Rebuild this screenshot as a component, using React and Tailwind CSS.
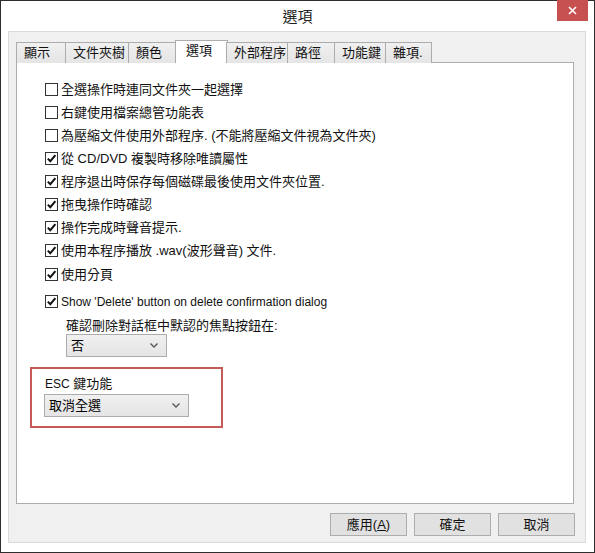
import { useState } from "react";

const font = { fontFamily: '"Liberation Sans", "Noto Sans CJK TC", sans-serif' };

const tabs = ["顯示", "文件夾樹", "顏色", "選項", "外部程序", "路徑", "功能鍵", "雜項."];
const tabWidths = [50, 64, 48, 53, 62, 48, 52, 47];

const initialOptions = [
  { label: "全選操作時連同文件夾一起選擇", checked: false },
  { label: "右鍵使用檔案總管功能表", checked: false },
  { label: "為壓縮文件使用外部程序. (不能將壓縮文件視為文件夾)", checked: false },
  { label: "從 CD/DVD 複製時移除唯讀屬性", checked: true },
  { label: "程序退出時保存每個磁碟最後使用文件夾位置.", checked: true },
  { label: "拖曳操作時確認", checked: true },
  { label: "操作完成時聲音提示.", checked: true },
  { label: "使用本程序播放 .wav(波形聲音) 文件.", checked: true },
  { label: "使用分頁", checked: true },
  { label: "Show 'Delete' button on delete confirmation dialog", checked: true, latin: true },
];

function Checkbox({ checked, onToggle }) {
  return (
    <button
      type="button"
      onClick={onToggle}
      className="w-[13px] h-[13px] border border-[#333] bg-white flex items-center justify-center shrink-0"
    >
      {checked && (
        <svg width="11" height="11" viewBox="0 0 11 11">
          <path d="M1.8 5.6 L4.3 8.2 L9.4 2.2" fill="none" stroke="#111" strokeWidth="2" />
        </svg>
      )}
    </button>
  );
}

function Select({ value, className }) {
  return (
    <div
      className={`h-[23px] border border-[#acacac] bg-gradient-to-b from-[#f0f0f0] to-[#e5e5e5] flex items-center justify-between pl-[4px] pr-[8px] ${className}`}
    >
      <span className="text-[13px] text-black">{value}</span>
      <svg width="8" height="5" viewBox="0 0 8 5">
        <path d="M0.5 0.5 L4 4 L7.5 0.5" fill="none" stroke="#555" strokeWidth="1.3" />
      </svg>
    </div>
  );
}

export default function App() {
  const [options, setOptions] = useState(initialOptions);

  const toggle = (i) =>
    setOptions((prev) =>
      prev.map((o, idx) => (idx === i ? { ...o, checked: !o.checked } : o))
    );

  return (
    <div
      style={font}
      className="w-[595px] h-[553px] bg-white border border-[#2d2d2d] flex flex-col text-[#111]"
    >
      {/* title bar */}
      <div className="h-[30px] relative flex items-center justify-center shrink-0">
        <span className="text-[15px] text-[#222] pt-[2px]">選項</span>
        <div className="absolute right-[6px] top-[-1px] w-[31px] h-[21px] bg-[#c75050] flex items-center justify-center">
          <svg width="9" height="9" viewBox="0 0 9 9">
            <path d="M1 1 L8 8 M8 1 L1 8" stroke="#fff" strokeWidth="1.6" />
          </svg>
        </div>
      </div>

      {/* dialog body */}
      <div className="flex-1 ml-[7px] mr-[8px] mb-[9px] bg-[#f0f0f0] border border-[#dadada] flex flex-col pl-[7px] pr-[11px] pt-[8px]">
        <div className="flex items-end h-[23px] relative z-10">
          {tabs.map((t, i) =>
            t === "選項" ? (
              <div
                key={t}
                style={{ width: tabWidths[i] }}
                className="h-[23px] shrink-0 whitespace-nowrap bg-white border border-[#acacac] border-b-0 text-[13px] pl-[10px] -mx-[1px]"
              >
                {t}
              </div>
            ) : (
              <div
                key={t}
                style={{ width: tabWidths[i] }}
                className="h-[21px] shrink-0 whitespace-nowrap bg-gradient-to-b from-[#f0f0f0] to-[#e5e5e5] border border-[#acacac] border-b-0 -ml-px first:ml-0 text-[13px] pl-[7px] leading-[19px]"
              >
                {t}
              </div>
            )
          )}
        </div>

        {/* options page */}
        <div className="h-[442px] -mt-px bg-white border border-[#acacac] pl-[28px] pt-[15px]">
          <div className="flex flex-col">
            {options.map((o, i) => (
              <label
                key={o.label}
                className={`flex items-center gap-[3px] ${o.latin ? "text-[12px]" : "text-[13px]"} ${
                  i === 9 ? "h-[27px] mt-[2px]" : i === 8 ? "h-[23px] mt-[1px]" : "h-[23px]"
                }`}
              >
                <Checkbox checked={o.checked} onToggle={() => toggle(i)} />
                <span>{o.label}</span>
              </label>
            ))}
          </div>

          <div className="ml-[21px]">
            <div className="text-[13px] h-[19px] leading-[22px]">確認刪除對話框中默認的焦點按鈕在:</div>
            <Select value="否" className="w-[101px]" />
          </div>

          <div className="-ml-[15px] mt-[10px] w-[193px] h-[61px] border-2 border-[#c55a5a] pl-[13px] pt-[5px]">
            <div className="text-[13px] h-[19px]">
              <span className="text-[12px]">ESC</span> 鍵功能
            </div>
            <Select value="取消全選" className="w-[145px] -ml-[1px] mt-[1px]" />
          </div>
        </div>

        {/* dialog buttons */}
        <div className="flex justify-end gap-[7px] mt-[9px] -mr-[1px]">
          {["應用(A)", "確定", "取消"].map((b) => (
            <button
              key={b}
              type="button"
              className="w-[77px] h-[23px] bg-[#e1e1e1] border border-[#adadad] text-[13px] flex items-center justify-center"
            >
              {b === "應用(A)" ? (
                <span>
                  應用(<span className="underline">A</span>)
                </span>
              ) : (
                b
              )}
            </button>
          ))}
        </div>
      </div>
    </div>
  );
}
